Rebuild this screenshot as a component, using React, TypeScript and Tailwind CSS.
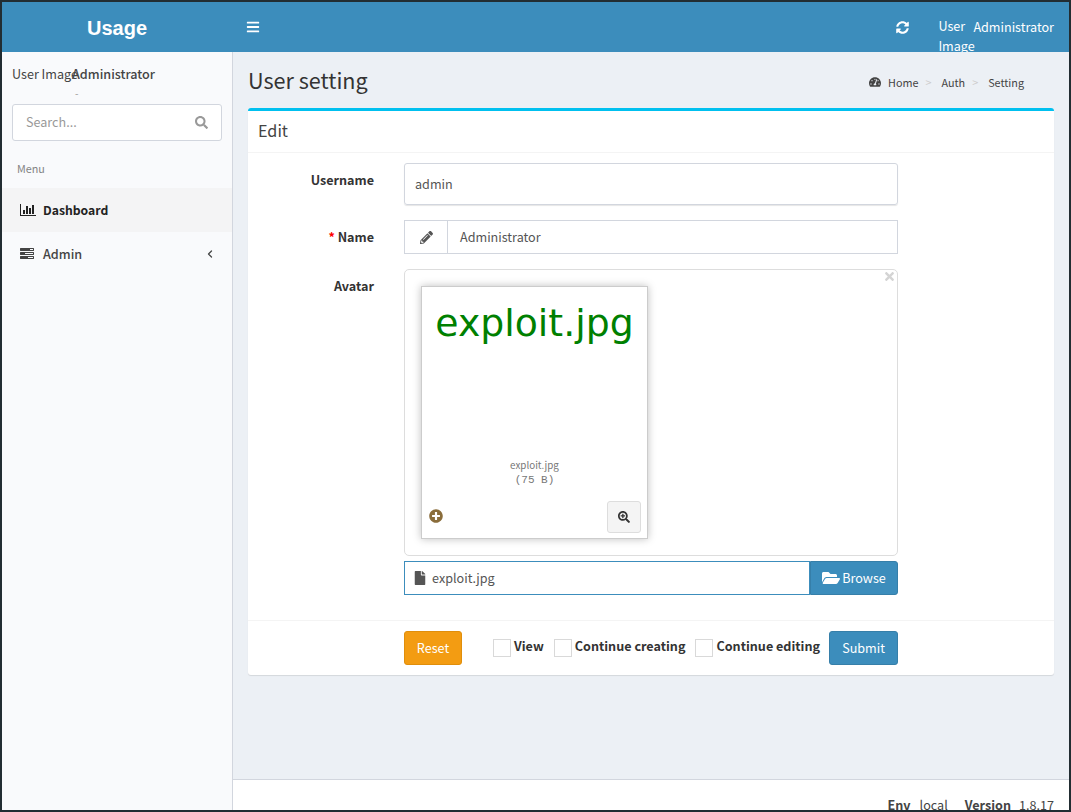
import React from 'react';
import { ChevronLeft } from 'lucide-react';
import {
  FaBars,
  FaFile,
  FaFolderOpen,
  FaPencilAlt,
  FaPlusCircle,
  FaSearch,
  FaSearchPlus,
  FaSyncAlt,
  FaTachometerAlt,
  FaTimes,
} from 'react-icons/fa';

const FONT = "font-['Noto_Sans_CJK_SC','Noto_Sans',sans-serif]";

const BarChartIcon = () => (
  <svg viewBox="0 0 2048 1792" className="h-[14px] w-[16px] fill-current">
    <path d="M640 896v512h-256v-512h256zm384-512v1024h-256v-1024h256zm1024 1152v128h-2048v-1536h128v1408h1920zm-640-896v768h-256v-768h256zm384-384v1152h-256v-1152h256z" />
  </svg>
);

const TasksIcon = () => (
  <svg viewBox="0 0 1792 1792" className="h-[14px] w-[14px] fill-current">
    <path
      fillRule="evenodd"
      d="M1024 1408h640v-128h-640v128zm-384-512h1024v-128h-1024v128zm640-512h384v-128h-384v128zm512 832v256q0 26-19 45t-45 19h-1664q-26 0-45-19t-19-45v-256q0-26 19-45t45-19h1664q26 0 45 19t19 45zm0-512v256q0 26-19 45t-45 19h-1664q-26 0-45-19t-19-45v-256q0-26 19-45t45-19h1664q26 0 45 19t19 45zm0-512v256q0 26-19 45t-45 19h-1664q-26 0-45-19t-19-45v-256q0-26 19-45t45-19h1664q26 0 45 19t19 45z"
    />
  </svg>
);

const Sidebar = () => (
  <aside className="w-[231px] shrink-0 bg-[#f9fafc] border-r border-[#d2d6de] text-[#444]">
    <div className="relative h-[52px] pl-[10px] pt-[12px] text-[12.6px] leading-5">
      <span className="text-[#444]">User Image</span>
      <span className="absolute left-[70px] top-[12px] font-medium text-[#444]">Administrator</span>
      <span className="absolute left-[73px] top-[33px] text-[10px] leading-4 text-[#999]">-</span>
    </div>
    <div className="mx-[10px] flex h-[37px] items-center justify-between rounded-[3px] border border-[#d2d6de] bg-white pl-[13px] pr-[13px]">
      <span className="text-[12.6px] text-[#999]">Search...</span>
      <FaSearch className="text-[13px] text-[#999]" />
    </div>
    <div className="px-[15px] pt-[19px] pb-[12px] text-[10.8px] leading-4 text-[#848484]">Menu</div>
    <div className="flex h-[44px] items-center gap-[7px] bg-[#f4f4f5] pl-[18px] text-[12.2px] font-semibold text-[#222]">
      <BarChartIcon />
      <span>Dashboard</span>
    </div>
    <div className="flex h-[44px] items-center gap-[9px] pl-[18px] pr-[16px] text-[12.6px] font-medium text-[#444]">
      <TasksIcon />
      <span>Admin</span>
      <ChevronLeft size={12} strokeWidth={2.5} className="ml-auto" />
    </div>
  </aside>
);

const Label = ({ children, top }: { children: React.ReactNode; top: string }) => (
  <label className={`w-[126px] shrink-0 text-right text-[12.6px] leading-5 font-bold text-[#333] ${top}`}>{children}</label>
);

const FilePreview = () => (
  <div className="relative h-[287px] rounded-[5px] border border-[#ddd] p-[16px]">
    <FaTimes className="absolute right-[1px] top-[0px] text-[13px] text-[#d4d4d4]" />
    <div className="flex h-[253px] w-[227px] flex-col items-center border border-[#ccc] bg-white shadow-[0_0_8px_rgba(0,0,0,0.25)]">
      <div className="mt-[10px] whitespace-nowrap font-['DejaVu_Sans',sans-serif] text-[37.8px] leading-[52px] text-[#008000]">exploit.jpg</div>
      <div className="mt-[108px] text-[9.8px] leading-4 text-[#777]">exploit.jpg</div>
      <div className="font-['Liberation_Mono',monospace] text-[11px] leading-[15px] text-[#777]">(75 B)</div>
      <div className="mt-auto mb-[5px] flex w-full items-center justify-between pl-[7px] pr-[6px]">
        <FaPlusCircle className="-mt-[2px] text-[14px] text-[#8a6d3b]" />
        <div className="flex h-[32px] w-[34px] items-center justify-center rounded-[3px] border border-[#ddd] bg-[#f4f4f4]">
          <FaSearchPlus className="text-[12px] text-[#333]" />
        </div>
      </div>
    </div>
  </div>
);

const Check = ({ label, className }: { label: string; className: string }) => (
  <div className={`flex items-center ${className}`}>
    <span className="h-[18px] w-[18px] border border-[#d9d9d9] bg-white" />
    <span className="ml-[3px] -mt-[4px] text-[12.6px] leading-5 font-bold text-[#333]">{label}</span>
  </div>
);

const EditBox = () => (
  <section className="mt-[13px] h-[567px] rounded-[3px] border-t-[3px] border-[#00c0ef] bg-white shadow-[0_1px_1px_rgba(0,0,0,0.1)]">
    <div className="flex h-[42px] items-center border-b border-[#f4f4f4] pb-[3px] pl-[10px] text-[16.2px] text-[#444]">Edit</div>
    <div className="h-[468px] border-b border-[#f4f4f4] pt-[10px]">
      <div className="flex gap-[30px]">
        <Label top="pt-[7px]">Username</Label>
        <div className="flex h-[42px] w-[494px] items-center rounded-[3px] border border-[#d2d6de] pl-[10px] text-[12.6px] text-[#555] shadow-[0_1px_1px_rgba(0,0,0,0.1)]">admin</div>
      </div>
      <div className="mt-[15px] flex gap-[30px]">
        <Label top="pt-[7px]"><span className="text-[#f00]">*</span> Name</Label>
        <div className="flex h-[34px] w-[494px] items-center border border-[#d2d6de] text-[12.6px] text-[#555]">
          <div className="flex h-full w-[43px] items-center justify-center border-r border-[#d2d6de]">
            <FaPencilAlt className="text-[13px] text-[#555]" />
          </div>
          <span className="pl-[12px]">Administrator</span>
        </div>
      </div>
      <div className="mt-[15px] flex gap-[30px]">
        <Label top="pt-[7px]">Avatar</Label>
        <div className="w-[494px]">
          <FilePreview />
          <div className="mt-[5px] flex h-[34px] text-[12.6px]">
            <div className="flex flex-1 items-center border border-[#3c8dbc] pl-[8px] text-[#555]">
              <FaFile className="text-[14px]" />
              <span className="pl-[5px]">exploit.jpg</span>
            </div>
            <div className="flex w-[88px] items-center justify-center gap-[2px] rounded-r-[3px] border border-[#367fa9] bg-[#3c8dbc] text-white">
              <FaFolderOpen className="text-[18px]" />
              <span>Browse</span>
            </div>
          </div>
        </div>
      </div>
    </div>
    <div className="flex pl-[156px] pt-[10px]">
      <div className="flex h-[34px] w-[58px] items-center justify-center rounded-[3px] border border-[#e08e0b] bg-[#f39c12] text-[12.6px] text-white">Reset</div>
      <Check label="View" className="ml-[31px]" />
      <Check label="Continue creating" className="ml-[10px]" />
      <Check label="Continue editing" className="ml-[10px]" />
      <div className="ml-[9px] flex h-[34px] w-[69px] items-center justify-center rounded-[3px] border border-[#367fa9] bg-[#3c8dbc] text-[12.6px] text-white">Submit</div>
    </div>
  </section>
);

export default function App() {
  return (
    <div className={`flex h-screen w-full flex-col overflow-hidden border-2 border-[#222d32] ${FONT}`}>
      <header className="flex h-[50px] shrink-0 bg-[#3c8dbc] text-white">
        <div className="flex w-[230px] items-center justify-center pt-[2px] font-['Liberation_Sans',sans-serif] text-[20px] font-bold">Usage</div>
        <FaBars className="ml-[14px] mt-[18px] text-[14px]" />
        <div className="ml-auto flex pr-[15px] text-[12.6px]">
          <FaSyncAlt className="mt-[19px] text-[13px]" />
          <div className="ml-[29px] w-[35px] pt-[14px] leading-[20px]">User Image</div>
          <div className="pt-[15px] leading-[20px]">Administrator</div>
        </div>
      </header>
      <div className="flex min-h-0 flex-1">
        <Sidebar />
        <main className="flex min-w-0 flex-1 flex-col bg-[#ecf0f5]">
          <div className="min-h-0 flex-1 px-[15px] pt-[14px]">
            <div className="flex h-[29px] items-center justify-between">
              <h1 className="pb-[2px] text-[21.6px] leading-[28px] text-[#333]">User setting</h1>
              <div className="flex items-center pt-[3px] pr-[30px] text-[10.8px] text-[#444]">
                <FaTachometerAlt className="mr-[7px] text-[12px]" />
                <span>Home</span>
                <span className="pl-[7px] pr-[10px] text-[#ccc]">&gt;</span>
                <span>Auth</span>
                <span className="pl-[7px] pr-[10px] text-[#ccc]">&gt;</span>
                <span>Setting</span>
              </div>
            </div>
            <EditBox />
          </div>
          <footer className="flex h-[31px] shrink-0 justify-end gap-[17px] border-t border-[#d2d6de] bg-white pr-[15px] pt-[15px] text-[12.6px] leading-5 text-[#444]">
            <div><b className="font-bold">Env</b><span className="ml-[9px]">local</span></div>
            <div><b className="font-bold">Version</b><span className="ml-[8px]">1.8.17</span></div>
          </footer>
        </main>
      </div>
    </div>
  );
}
